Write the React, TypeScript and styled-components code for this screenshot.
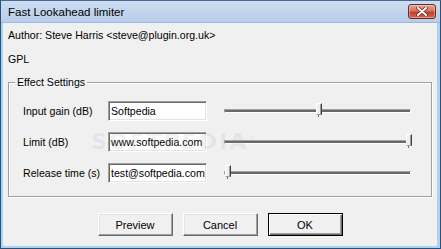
import React from "react";
import styled, { createGlobalStyle } from "styled-components";

const GlobalStyle = createGlobalStyle`
  html, body {
    margin: 0;
    padding: 0;
    background: #f0f0f0;
  }
  body {
    font-family: "Liberation Sans", Arial, sans-serif;
    font-size: 10.6px;
    color: #000;
  }
`;

type Setting = { label: string; text: string; value: number };

const SETTINGS: Setting[] = [
  { label: "Input gain (dB)", text: "Softpedia", value: 0.5 },
  { label: "Limit (dB)", text: "www.softpedia.com", value: 1 },
  { label: "Release time (s)", text: "test@softpedia.com", value: 0 },
];

const Slider: React.FC<{ value: number }> = ({ value }) => (
  <SliderWrap>
    <Track />
    <Thumb style={{ left: `${1 + value * 181}px` }} />
  </SliderWrap>
);

const App: React.FC = () => {
  return (
    <>
      <GlobalStyle />
      <Window>
        <TitleBar>
          <Title>Fast Lookahead limiter</Title>
          <CloseButton>
            <svg width="14" height="9" viewBox="0 0 14 9">
              <path
                d="M3 1 L11 8 M11 1 L3 8"
                stroke="#5a2219"
                strokeWidth="3.4"
                strokeLinecap="round"
              />
              <path
                d="M3 1 L11 8 M11 1 L3 8"
                stroke="#fff"
                strokeWidth="2"
                strokeLinecap="round"
              />
            </svg>
          </CloseButton>
        </TitleBar>
        <Body>
          <InfoLine>Author: Steve Harris &lt;steve@plugin.org.uk&gt;</InfoLine>
          <InfoLine>GPL</InfoLine>
          <GroupBox>
            <Legend>Effect Settings</Legend>
            <Rows>
              {SETTINGS.map((s) => (
                <Row key={s.label}>
                  <Label>{s.label}</Label>
                  <TextBox>{s.text}</TextBox>
                  <Slider value={s.value} />
                </Row>
              ))}
            </Rows>
          </GroupBox>
          <ButtonRow>
            <Button>Preview</Button>
            <Button>Cancel</Button>
            <Button isDefault>OK</Button>
          </ButtonRow>
          <Watermark>
            SOFTPEDIA<sup>™</sup>
          </Watermark>
        </Body>
      </Window>
    </>
  );
};

export default App;

const Window = styled.div`
  position: relative;
  box-sizing: border-box;
  width: 441px;
  height: 249px;
  display: flex;
  flex-direction: column;
  border: 1px solid #2c4f7c;
  border-top-color: #4a6a96;
  background: #a9d4f2;
  padding: 0 3px 2px 2px;
  overflow: hidden;
`;

const TitleBar = styled.div`
  height: 21px;
  margin: 0 -3px 0 -2px;
  display: flex;
  align-items: center;
  justify-content: space-between;
  padding: 0 4px 0 7px;
  background: linear-gradient(#cddcf0, #b7cde9);
  border-bottom: 1px solid #9fb9db;
`;

const Title = styled.span`
  font-size: 11.5px;
  color: #000;
`;

const CloseButton = styled.div`
  box-sizing: border-box;
  width: 28px;
  height: 15px;
  display: flex;
  align-items: center;
  justify-content: center;
  border: 1px solid #6b2a20;
  border-radius: 3px;
  background: linear-gradient(#e7a392 0%, #d8755f 45%, #c2412a 55%, #cf6a50 100%);
  box-shadow: inset 0 0 0 1px rgba(255, 255, 255, 0.35);
`;

const Body = styled.div`
  position: relative;
  flex: 1;
  display: flex;
  flex-direction: column;
  background: #f0f0f0;
  padding: 5px 0 0 5px;
`;

const InfoLine = styled.div`
  height: 14px;
  line-height: 14px;
  margin-bottom: 10px;
`;

const GroupBox = styled.fieldset`
  box-sizing: border-box;
  width: 424px;
  margin: -1px 0 0 0;
  padding: 12px 0 13px 6px;
  border: 1px solid #a0a0a0;
  box-shadow: inset 1px 1px 0 #fff, 1px 1px 0 #fff;
`;

const Legend = styled.legend`
  padding: 0 2px;
  line-height: 14px;
`;

const Rows = styled.div`
  display: flex;
  flex-direction: column;
  gap: 11px;
  padding-left: 8px;
`;

const Row = styled.div`
  display: grid;
  grid-template-columns: 85px 99px 204px;
  align-items: center;
  height: 20px;
`;

const Label = styled.span`
  white-space: nowrap;
`;

const TextBox = styled.div`
  box-sizing: border-box;
  height: 20px;
  padding: 0 2px;
  line-height: 18px;
  background: #fff;
  white-space: nowrap;
  overflow: hidden;
  border-top: 1px solid #a0a0a0;
  border-left: 1px solid #a0a0a0;
  border-right: 1px solid #fff;
  border-bottom: 1px solid #fff;
  box-shadow: inset 1px 1px 0 #696969, inset -1px -1px 0 #e3e3e3;
`;

const SliderWrap = styled.div`
  position: relative;
  height: 20px;
  margin-left: 17px;
  display: flex;
  align-items: center;
`;

const Track = styled.div`
  box-sizing: border-box;
  width: 100%;
  height: 4px;
  border-top: 1px solid #a0a0a0;
  border-left: 1px solid #a0a0a0;
  border-bottom: 1px solid #fff;
  border-right: 1px solid #fff;
  background: #696969;
`;

const Thumb = styled.div`
  position: absolute;
  top: 2px;
  box-sizing: border-box;
  width: 6px;
  height: 12px;
  background: #f0f0f0;
  border-top: 1px solid #fff;
  border-left: 1px solid #fff;
  border-right: 1px solid #404040;
  border-bottom: 1px solid #a0a0a0;
  box-shadow: inset -1px 0 0 #a0a0a0;

  &::after {
    content: "";
    position: absolute;
    left: 1px;
    bottom: -3px;
    width: 1px;
    height: 2px;
    background: #696969;
  }
`;

const ButtonRow = styled.div`
  display: flex;
  justify-content: center;
  gap: 10px;
  margin-top: 16px;
  padding-right: 5px;
`;

const Button = styled.div<{ isDefault?: boolean }>`
  box-sizing: border-box;
  width: 75px;
  height: 23px;
  display: flex;
  align-items: center;
  justify-content: center;
  font-size: 11px;
  background: #f0f0f0;
  border: 1px solid ${({ isDefault }) => (isDefault ? "#000" : "#f0f0f0")};
  border-top-color: ${({ isDefault }) => (isDefault ? "#000" : "#fff")};
  border-left-color: ${({ isDefault }) => (isDefault ? "#000" : "#fff")};
  border-right-color: ${({ isDefault }) => (isDefault ? "#000" : "#696969")};
  border-bottom-color: ${({ isDefault }) => (isDefault ? "#000" : "#696969")};
  box-shadow: ${({ isDefault }) =>
    isDefault
      ? "inset 1px 1px 0 #fff, inset -1px -1px 0 #696969, inset -2px -2px 0 #a0a0a0"
      : "inset -1px -1px 0 #a0a0a0, inset 1px 1px 0 #e3e3e3"};
`;

const Watermark = styled.div`
  position: absolute;
  left: 88px;
  top: 106px;
  font-family: "DejaVu Sans", sans-serif;
  font-weight: bold;
  font-size: 22px;
  letter-spacing: 2px;
  color: rgba(150, 150, 150, 0.12);
  pointer-events: none;

  sup {
    font-size: 7px;
    letter-spacing: 0;
  }
`;
